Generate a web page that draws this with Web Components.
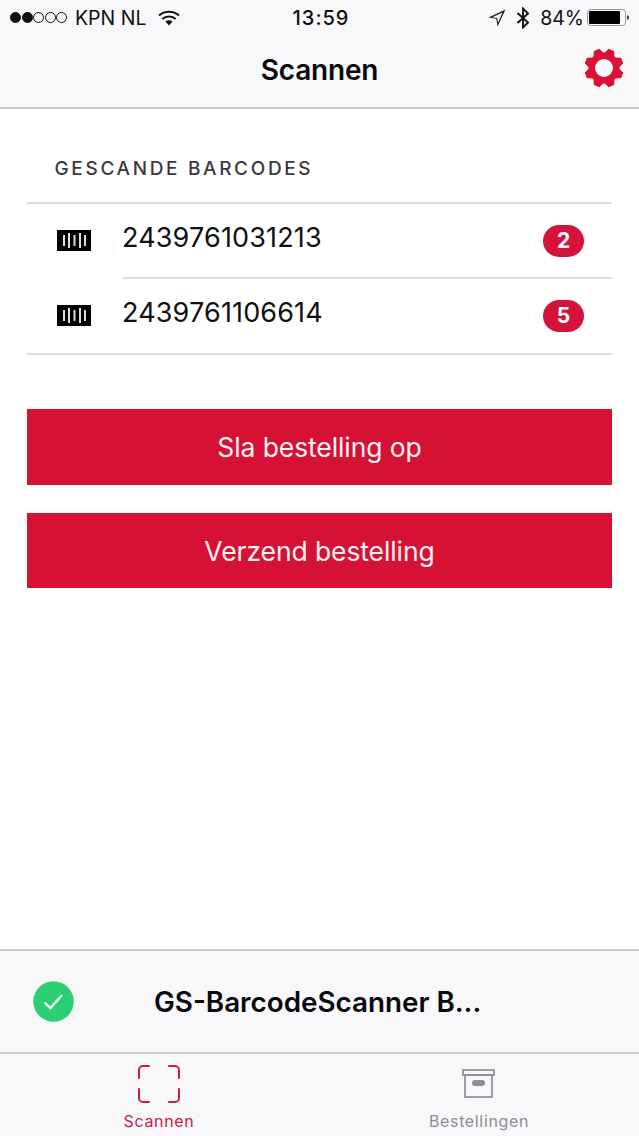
<!DOCTYPE html>
<html>
<head>
<meta charset="utf-8">
<style>
  html, body { margin: 0; padding: 0; background: #fff; }
  body { font-family: Inter, "Liberation Sans", sans-serif; color: #0a0a0e; }
  scan-app { height: 1136px; }
</style>
</head>
<body>
<scan-app>
  <status-bar slot="top"></status-bar>
  <nav-bar slot="top" title="Scannen"></nav-bar>
  <section-label>GESCANDE BARCODES</section-label>
  <barcode-list>
    <barcode-row code="2439761031213" count="2"></barcode-row>
    <barcode-row code="2439761106614" count="5" last></barcode-row>
  </barcode-list>
  <action-button style="margin-top:54px">Sla bestelling op</action-button>
  <action-button style="margin-top:28px;height:75px">Verzend bestelling</action-button>
  <device-panel slot="bottom">GS-BarcodeScanner B...</device-panel>
  <tab-bar slot="bottom"></tab-bar>
</scan-app>

<script>
class ScanApp extends HTMLElement {
  constructor() {
    super();
    this.attachShadow({ mode: 'open' });
    this.shadowRoot.innerHTML = `
      <style>
        :host { display: flex; flex-direction: column; width: 639px; }
        main { flex: 1; display: flex; flex-direction: column; padding: 0 27px; }
      </style>
      <slot name="top"></slot>
      <main><slot></slot></main>
      <slot name="bottom"></slot>
    `;
  }
}

class StatusBar extends HTMLElement {
  constructor() {
    super();
    this.attachShadow({ mode: 'open' });
    this.shadowRoot.innerHTML = `
      <style>
        :host { display: grid; grid-template-columns: 1fr auto 1fr; align-items: center; height: 35px; background: #f8f7fa; font-size: 19.5px; color: #111; }
        .left { display: flex; align-items: center; padding-left: 10px; }
        .dots { display: flex; gap: .5px; margin-right: 8px; }
        .dots i { width: 11px; height: 11px; border-radius: 50%; border: 1px solid #111; box-sizing: border-box; }
        .dots i.on { background: #111; }
        .wifi { margin-left: 12px; }
        .time { font-weight: 500; font-size: 20px; letter-spacing: 1px; margin-left: 3px; }
        .right { display: flex; align-items: center; justify-content: flex-end; padding-right: 9px; }
        .bt { margin: 0 10px 0 10px; }
        .batt { margin-left: 3px; }
      </style>
      <div class="left">
        <div class="dots"><i class="on"></i><i class="on"></i><i></i><i></i><i></i></div>
        <span>KPN NL</span>
        <svg class="wifi" width="22" height="16" viewBox="0 0 22 16"><path d="M1 5.6C6.6.6 15.4.6 21 5.6M4.4 9C8 5.800 14 5.800 17.600 9" fill="none" stroke="#111" stroke-width="2"/><path d="M7.500 11.600c2-1.700 5-1.700 7 0L11 15.600z" fill="#111"/></svg>
      </div>
      <div class="time">13:59</div>
      <div class="right">
        <svg width="18" height="18" viewBox="0 0 18 18"><path d="M17.500.5 .5 8.500l7.800 1.200L9.500 17.500z M14.500 3.500 4.300 8.200 9.300 8.900 10 13.800z" fill="#222" fill-rule="evenodd"/></svg>
        <svg class="bt" width="14" height="22" viewBox="0 0 14 22"><path d="M1.500 6 12 15.500 7 20.500V1.500L12 6.500 1.500 16" fill="none" stroke="#111" stroke-width="1.900"/></svg>
        <span>84%</span>
        <svg class="batt" width="43" height="18" viewBox="0 0 43 18"><rect x=".5" y=".5" width="38" height="16" rx="3" fill="none" stroke="#999"/><rect x="2" y="2" width="31" height="13" rx="1" fill="#000"/><path d="M40 6.200c1.500.2 2 1.200 2 2.300s-.5 2.100-2 2.300z" fill="#333"/></svg>
      </div>
    `;
  }
}

class NavBar extends HTMLElement {
  constructor() {
    super();
    this.attachShadow({ mode: 'open' });
    const teeth = [0, 1, 2, 3, 4, 5, 6, 7].map(i =>
      `<polygon points="-4.800,-14 -2.600,-19 2.600,-19 4.800,-14" transform="rotate(${22.5 + i * 45})"/>`
    ).join('');
    this.shadowRoot.innerHTML = `
      <style>
        :host { display: block; position: relative; height: 72px; background: #f8f7fa; border-bottom: 2px solid #ccccce; text-align: center; }
        h1 { margin: 0; font-size: 28px; font-weight: 600; line-height: 71px; letter-spacing: -.2px; color: #0a0a0e; }
        svg { position: absolute; right: 14.5px; top: 12px; }
      </style>
      <h1>${this.getAttribute('title')}</h1>
      <svg width="42" height="42" viewBox="-21 -21 42 42">
        <g fill="#d91236" stroke="#d91236" stroke-width="1.200" stroke-linejoin="round">${teeth}</g>
        <circle r="12.300" fill="none" stroke="#d91236" stroke-width="6.600"/>
      </svg>
    `;
  }
}

class SectionLabel extends HTMLElement {
  constructor() {
    super();
    this.attachShadow({ mode: 'open' });
    this.shadowRoot.innerHTML = `
      <style>
        :host { display: block; height: 93px; box-sizing: border-box; padding: 49px 0 0 27.5px; font-size: 19px; line-height: 22px; font-weight: 500; letter-spacing: 2.65px; color: #3a3a40; }
      </style>
      <slot></slot>
    `;
  }
}

class BarcodeList extends HTMLElement {
  constructor() {
    super();
    this.attachShadow({ mode: 'open' });
    this.shadowRoot.innerHTML = `
      <style>
        :host { display: block; border-top: 2px solid #dcdcde; border-bottom: 2px solid #dcdcde; }
      </style>
      <slot></slot>
    `;
  }
}

class BarcodeRow extends HTMLElement {
  constructor() {
    super();
    this.attachShadow({ mode: 'open' });
    const last = this.hasAttribute('last');
    this.shadowRoot.innerHTML = `
      <style>
        :host { display: flex; height: ${last ? 74 : 75}px; }
        .icon { width: 96px; flex: none; display: flex; padding: 26px 0 0 30px; box-sizing: border-box; }
        .body { flex: 1; display: flex; justify-content: space-between; ${last ? '' : 'border-bottom: 2px solid #dcdcde;'} }
        .code { font-size: 27px; line-height: 32px; padding-top: 18px; margin-left: -1px; letter-spacing: .15px; color: #111; }
        .badge { width: 41px; height: 32px; margin: 21px 28px 0 0; border-radius: 16px; background: #d5123a; color: #fff; font-size: 21px; font-weight: 700; line-height: 32px; text-align: center; }
      </style>
      <div class="icon">
        <svg width="34" height="21" viewBox="0 0 34 21">
          <rect width="34" height="21" fill="#000"/>
          <g fill="#ddd"><rect x="6" y="5" width="2" height="11"/><rect x="11" y="3" width="2" height="15"/><rect x="16.500" y="5" width="2" height="11"/><rect x="22" y="3" width="2" height="15"/><rect x="27" y="5" width="2" height="11"/></g>
        </svg>
      </div>
      <div class="body">
        <div class="code">${this.getAttribute('code')}</div>
        <div class="badge">${this.getAttribute('count')}</div>
      </div>
    `;
  }
}

class ActionButton extends HTMLElement {
  constructor() {
    super();
    this.attachShadow({ mode: 'open' });
    this.shadowRoot.innerHTML = `
      <style>
        :host { display: flex; align-items: center; justify-content: center; height: 76px; background: #d61234; color: #fdf3f5; font-size: 26.5px; letter-spacing: -.1px; box-sizing: border-box; }
      </style>
      <slot></slot>
    `;
  }
}

class DevicePanel extends HTMLElement {
  constructor() {
    super();
    this.attachShadow({ mode: 'open' });
    this.shadowRoot.innerHTML = `
      <style>
        :host { display: flex; align-items: center; height: 101px; background: #f8f7fa; border-top: 2px solid #ccccce; font-size: 27.8px; font-weight: 600; color: #0a0a0e; }
        svg { margin: 0 0 0 33px; flex: none; }
        span { margin-left: 80px; }
      </style>
      <svg width="41" height="41" viewBox="0 0 41 41">
        <circle cx="20.500" cy="20.500" r="20.300" fill="#2bd073"/>
        <path d="M11.500 21.500l6 5.500 11.500-13" fill="none" stroke="#fff" stroke-width="2.300"/>
      </svg>
      <span><slot></slot></span>
    `;
  }
}

class TabBar extends HTMLElement {
  constructor() {
    super();
    this.attachShadow({ mode: 'open' });
    this.shadowRoot.innerHTML = `
      <style>
        :host { display: grid; grid-template-columns: 318px 321px; height: 82px; background: #f8f7fa; border-top: 2px solid #ccccce; font-size: 16px; letter-spacing: .65px; }
        .tab { display: flex; flex-direction: column; align-items: center; }
        .icon { height: 57px; padding-top: 10px; box-sizing: border-box; }
        .on { color: #c81c46; }
        .off { color: #8e8e93; padding-left: 1px; }
      </style>
      <div class="tab on">
        <div class="icon">
          <svg width="44" height="40" viewBox="0 0 44 40" fill="none" stroke="#c9213f" stroke-width="2">
            <path d="M12 2H6A4 4 0 0 0 2 6v8M32 2h6a4 4 0 0 1 4 4v8M2 25v9a4 4 0 0 0 4 4h6M42 25v9a4 4 0 0 1-4 4h-6" stroke-linecap="round"/>
          </svg>
        </div>
        <span>Scannen</span>
      </div>
      <div class="tab off">
        <div class="icon">
          <svg width="34" height="32" viewBox="0 0 34 32" style="margin-top:4px">
            <g fill="none" stroke="#8e8e93" stroke-width="1.700"><rect x="1" y="2" width="31" height="5"/><rect x="3" y="7" width="27" height="22"/></g>
            <rect x="10" y="12" width="13" height="6" rx="3" fill="#8e8e93"/>
          </svg>
        </div>
        <span>Bestellingen</span>
      </div>
    `;
  }
}

customElements.define('scan-app', ScanApp);
customElements.define('status-bar', StatusBar);
customElements.define('nav-bar', NavBar);
customElements.define('section-label', SectionLabel);
customElements.define('barcode-list', BarcodeList);
customElements.define('barcode-row', BarcodeRow);
customElements.define('action-button', ActionButton);
customElements.define('device-panel', DevicePanel);
customElements.define('tab-bar', TabBar);
</script>
</body>
</html>
